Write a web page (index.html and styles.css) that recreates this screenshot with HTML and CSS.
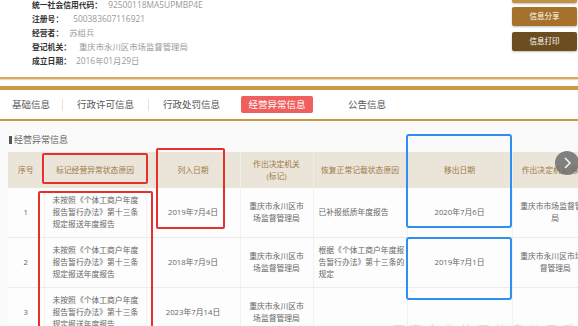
FILE: index.html
```html
<!DOCTYPE html>
<html lang="zh-CN">
<head>
<meta charset="UTF-8" />
<meta name="viewport" content="width=device-width, initial-scale=1" />
<title>经营异常信息</title>
<link rel="stylesheet" href="styles.css">
</head>
<body>
<div class="page">
  <div class="head">
    <div class="info">
      <p><b>统一社会信用代码：</b><span class="v1">92500118MA5UPMBP4E</span></p>
      <p><b>注册号：</b><span class="v2">500383607116921</span></p>
      <p><b>经营者：</b><span class="v3">苏组兵</span></p>
      <p><b>登记机关：</b><span class="v4">重庆市永川区市场监督管理局</span></p>
      <p><b>成立日期：</b><span class="v5">2016年01月29日</span></p>
    </div>
    <div class="btns">
      <a class="btn btn-gold"></a>
      <a class="btn btn-share">信息分享</a>
      <a class="btn btn-print">信息打印</a>
    </div>
  </div>

  <div class="rule"></div>

  <div class="tabs">
    <div class="tab t1">基础信息</div>
    <div class="tab t2">行政许可信息</div>
    <div class="tab t3">行政处罚信息</div>
    <div class="tab t4"><span class="active">经营异常信息</span></div>
    <div class="tab t5">公告信息</div>
  </div>

  <div class="content">
    <h3 class="title">经营异常信息</h3>
    <table class="grid">
      <colgroup>
        <col style="width:36px"><col style="width:102px"><col style="width:94px"><col style="width:73px"><col style="width:94px"><col style="width:105px"><col style="width:86px">
      </colgroup>
      <thead>
        <tr>
          <th>序号</th>
          <th>标记经营异常状态原因</th>
          <th>列入日期</th>
          <th class="narrow">作出决定机关(标记)</th>
          <th>恢复正常记载状态原因</th>
          <th>移出日期</th>
          <th class="wide">作出决定机关(移出)</th>
        </tr>
      </thead>
      <tbody>
        <tr>
          <td>1</td>
          <td class="reason">未按照《个体工商户年度报告暂行办法》第十三条规定报送年度报告</td>
          <td>2019年7月4日</td>
          <td class="narrow">重庆市永川区市场监督管理局</td>
          <td class="restore">已补报纸质年度报告</td>
          <td>2020年7月6日</td>
          <td class="wide">重庆市市场监督管理局</td>
        </tr>
        <tr>
          <td>2</td>
          <td class="reason">未按照《个体工商户年度报告暂行办法》第十三条规定报送年度报告</td>
          <td>2018年7月9日</td>
          <td class="narrow">重庆市永川区市场监督管理局</td>
          <td class="restore">根据《个体工商户年度报告暂行办法》第十三条的规定</td>
          <td>2019年7月1日</td>
          <td class="wide">重庆市永川区市场监督管理局</td>
        </tr>
        <tr>
          <td>3</td>
          <td class="reason">未按照《个体工商户年度报告暂行办法》第十三条规定报送年度报告</td>
          <td>2023年7月14日</td>
          <td class="narrow">重庆市永川区市场监督管理局</td>
          <td class="restore"></td>
          <td></td>
          <td class="wide"></td>
        </tr>
      </tbody>
    </table>
  </div>

  <!-- annotation marks drawn over the table -->
  <div class="mark red mark-a"></div>
  <div class="mark red mark-b"></div>
  <div class="mark red mark-c"></div>
  <div class="mark blue mark-d"></div>
  <div class="mark blue mark-e"></div>
  <div class="next">
    <svg width="24" height="24" viewBox="0 0 24 24"><path d="M10 7l5 5-5 5" fill="none" stroke="#fff" stroke-width="1.4"/></svg>
  </div>
  <div class="watermark">国家企业信用信息公示系统</div>
</div>
</body>
</html>
```

FILE: styles.css
```css
body { margin: 0; background: #fff; font-family: "Open Sans", "Noto Sans CJK SC", sans-serif; }
.page { position: relative; width: 578px; height: 326px; overflow: hidden; }

.head { display: flex; justify-content: space-between; height: 77px; }
.info { margin: -2px 0 0 32px; }
.info p { margin: 0; height: 14px; line-height: 14px; font-size: 7.8px; white-space: nowrap; }
.info b { color: #333; }
.info span { color: #999; font-size: 8.4px; margin-left: 6px; }
.info .v2 { margin-left: 10px; }
.info .v4 { margin-left: 8px; }
.info .v5 { margin-left: 5px; }

.btns { display: flex; flex-direction: column; width: 65px; margin: -16px 1px 0 0; }
.btn { display: block; height: 19px; line-height: 19px; text-align: center; color: #fff; font-size: 7.5px; border-radius: 2px; box-shadow: 0 1px 2px rgba(0,0,0,.25); }
.btn-gold { background: #c39142; }
.btn-share { background: #a6712b; margin-top: 4px; }
.btn-print { background: #6c4d1f; margin-top: 6px; }

.rule { height: 2px; background: #d5aa58; box-shadow: 0 1px 1px rgba(190,150,70,.4); margin-bottom: 7px; }

.tabs { display: flex; align-items: center; height: 29px; border-top: 4px solid #c99a45; border-bottom: 2px solid #c99a45; box-shadow: 0 2px 3px rgba(0,0,0,.08); background: #fff; }
.tab { font-size: 9.5px; color: #555; text-align: center; line-height: 12px; }
.t1 { width: 62px; border-right: 1px solid #e2e2e2; }
.t2 { width: 85px; border-right: 1px solid #e2e2e2; }
.t3 { width: 85px; }
.t4 { width: 86px; }
.t5 { width: 94px; }
.active { display: inline-block; width: 72px; height: 17px; line-height: 17px; background: #ef5f5e; color: #fff; border-radius: 2px; }

.content { background: #fafafa; height: 205px; }
.title { margin: 0; padding: 13px 0 6px 9px; font-size: 9px; line-height: 12px; font-weight: normal; color: #666; }
.title::before { content: ""; display: inline-block; width: 3px; height: 8px; background: #555; margin-right: 2px; vertical-align: -1px; }

.grid { margin-left: 8px; width: 590px; table-layout: fixed; border-collapse: collapse; font-size: 7.8px; }
.grid th { height: 36px; padding: 0 4px; background: #ebe4d8; color: #9c7b47; font-weight: normal; line-height: 12px; text-align: center; border-left: 1px solid #f2ede4; }
.grid td { padding: 6px 4px 7px; line-height: 12px; color: #666; text-align: center; background: #fdfdfd; border-bottom: 1px solid #ececec; border-left: 1px solid #f1f1f1; }
.grid th:first-child, .grid td:first-child { border-left: 0; }
.grid td.reason { text-align: left; padding-left: 8px; padding-right: 5px; }
.grid td.restore { text-align: left; padding-left: 5px; padding-right: 0; }
.grid .narrow { padding-left: 8px; padding-right: 8px; }
.grid .wide { padding-left: 6px; padding-right: 6px; }

.mark { position: absolute; box-sizing: border-box; border: 2px solid; border-radius: 2px; }
.red { border-color: #e6302e; }
.blue { border-color: #2f8ff0; border-radius: 3px; }
.mark-a { left: 42px; top: 153px; width: 106px; height: 31px; }
.mark-b { left: 156px; top: 148px; width: 69px; height: 81px; }
.mark-c { left: 38px; top: 191px; width: 115px; height: 150px; }
.mark-d { left: 406px; top: 134px; width: 106px; height: 94px; }
.mark-e { left: 406px; top: 237px; width: 106px; height: 63px; }

.next { position: absolute; left: 555px; top: 151px; width: 24px; height: 24px; border-radius: 50%; background: rgba(110,110,110,.85); }
.next svg { display: block; }

.watermark { position: absolute; left: 392px; top: 320px; font-size: 13px; letter-spacing: 4px; color: #dedede; white-space: nowrap; }
```
